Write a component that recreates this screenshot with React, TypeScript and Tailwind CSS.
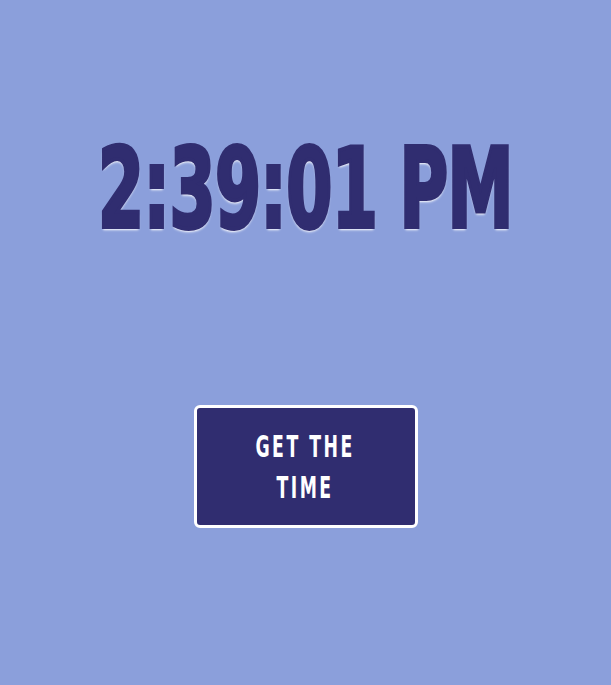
import { useEffect, useState } from "react";

function formatTime(d: Date) {
  return d.toLocaleTimeString("en-US", { hour: "numeric", minute: "2-digit", second: "2-digit" });
}

export default function App() {
  const [time, setTime] = useState("2:39:01 PM");
  const [tick, setTick] = useState(false);

  useEffect(() => {
    if (!tick) return;
    const id = setInterval(() => setTime(formatTime(new Date())), 1000);
    return () => clearInterval(id);
  }, [tick]);

  return (
    <div className="min-h-screen w-full bg-[#8b9fdb] flex flex-col items-center pt-[134px] font-['DejaVu_Sans_Condensed',sans-serif]">
      <h1 className="whitespace-nowrap text-[#302d70] text-[110px] leading-[110px] font-bold tracking-[-1px] scale-x-[0.67] [-webkit-text-stroke:4px_#302d70] [text-shadow:0_3px_3px_#ffffff]">
        {time}
      </h1>

      <button
        onClick={() => {
          setTime(formatTime(new Date()));
          setTick(true);
        }}
        className="mt-[161px] w-[224px] h-[123px] rounded-md border-[3px] border-white bg-[#302d70] text-white flex items-center justify-center"
      >
        <span className="inline-block scale-x-[0.62] text-[31px] leading-[41px] font-bold tracking-[4px] whitespace-nowrap">
          GET THE
          <br />
          TIME
        </span>
      </button>
    </div>
  );
}
